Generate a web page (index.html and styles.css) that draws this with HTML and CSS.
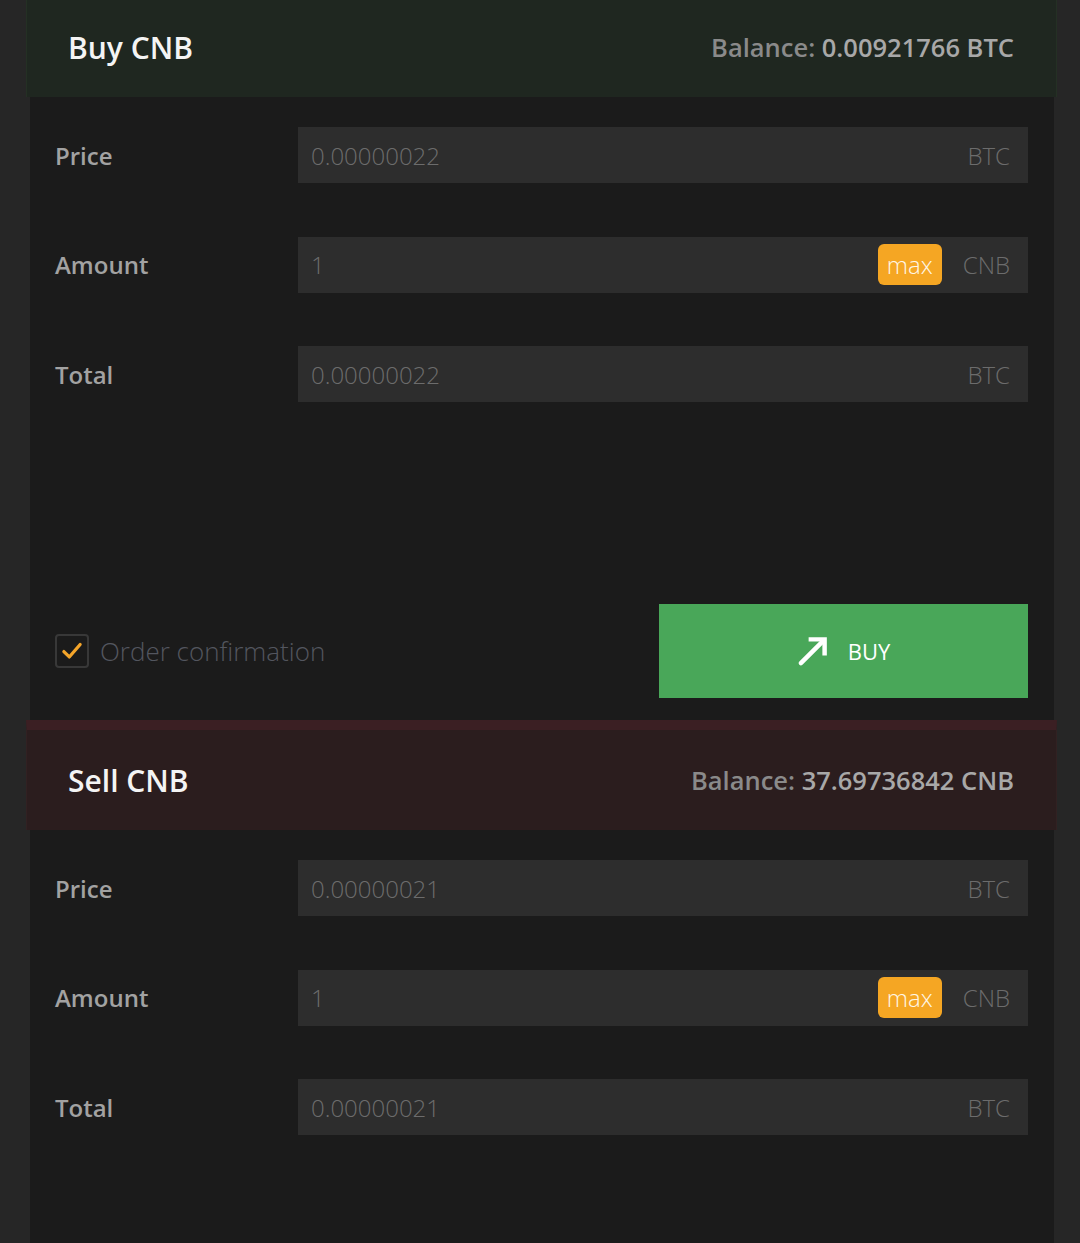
FILE: index.html
```html
<!DOCTYPE html>
<html lang="en">
<head>
    <meta charset="UTF-8">
    <meta name="viewport" content="width=device-width, initial-scale=1.0">
    <title>Trade CNB</title>
    <link rel="stylesheet" href="styles.css">
</head>
<body>
    <div class="panel">
        <!-- Buy form -->
        <div class="trade-head buy">
            <h2>Buy CNB</h2>
            <div class="balance">Balance: <span>0.00921766 BTC</span></div>
        </div>

        <div class="trade-form">
            <div class="row">
                <label>Price</label>
                <div class="field">
                    <span class="value">0.00000022</span>
                    <span class="unit">BTC</span>
                </div>
            </div>
            <div class="row">
                <label>Amount</label>
                <div class="field">
                    <span class="value">1</span>
                    <span class="max">max</span>
                    <span class="unit">CNB</span>
                </div>
            </div>
            <div class="row">
                <label>Total</label>
                <div class="field">
                    <span class="value">0.00000022</span>
                    <span class="unit">BTC</span>
                </div>
            </div>

            <div class="actions">
                <div class="confirm">
                    <span class="checkbox">
                        <svg viewBox="0 0 24 24" fill="none">
                            <path d="M4.5 12.5L9.5 17.5L19.5 6" stroke="#f4a52a" stroke-width="3" stroke-linecap="round" stroke-linejoin="round"/>
                        </svg>
                    </span>
                    Order confirmation
                </div>
                <button class="btn-buy">
                    <svg class="arrow" viewBox="0 0 32 32" fill="none">
                        <path d="M4 28L26 6" stroke="#fff" stroke-width="4.6" stroke-linecap="round"/>
                        <path d="M12 3.5H28.5V20" stroke="#fff" stroke-width="4.6" stroke-linejoin="miter"/>
                    </svg>
                    BUY
                </button>
            </div>
        </div>

        <!-- Sell form -->
        <div class="trade-head sell">
            <h2>Sell CNB</h2>
            <div class="balance">Balance: <span>37.69736842 CNB</span></div>
        </div>

        <div class="trade-form">
            <div class="row">
                <label>Price</label>
                <div class="field">
                    <span class="value">0.00000021</span>
                    <span class="unit">BTC</span>
                </div>
            </div>
            <div class="row">
                <label>Amount</label>
                <div class="field">
                    <span class="value">1</span>
                    <span class="max">max</span>
                    <span class="unit">CNB</span>
                </div>
            </div>
            <div class="row">
                <label>Total</label>
                <div class="field">
                    <span class="value">0.00000021</span>
                    <span class="unit">BTC</span>
                </div>
            </div>
        </div>
    </div>
</body>
</html>
```

FILE: styles.css
```css
* {
    margin: 0;
    padding: 0;
    box-sizing: border-box;
}

body {
    font-family: "Open Sans", "Noto Sans", sans-serif;
    background-color: #262626;
    color: #a4a4a4;
    overflow: hidden;
}

.panel {
    margin: 0 26px 0 30px;
    background-color: #1b1b1b;
    min-height: calc(100vh + 40px);
}

/* Section headers */
.trade-head {
    display: flex;
    align-items: center;
    justify-content: space-between;
    height: 110px;
    margin: 0 -3px 0 -4px;
    padding: 0 42px 0 41px;
    border: 1px solid transparent;
    border-top-width: 10px;
    border-bottom-width: 0;
}

.trade-head.buy {
    margin-top: -13px;
    background-color: #1f2720;
    border-color: #243024;
}

.trade-head.sell {
    background-color: #2b1d1e;
    border-color: #312122;
    border-top-color: #3b1f23;
}

.trade-head h2 {
    font-size: 30px;
    font-weight: 600;
    color: #f4f4f4;
}

.balance {
    font-size: 25.5px;
    font-weight: 600;
    color: #8a8a8a;
}

.balance span {
    color: #a8a8a8;
}

/* Form rows */
.trade-form {
    padding: 30px 26px 0 25px;
}

.row {
    display: flex;
    align-items: center;
    height: 56px;
    margin-bottom: 53.5px;
}

.row label {
    width: 243px;
    font-size: 24px;
    font-weight: 600;
    color: #a2a2a2;
}

.field {
    flex: 1;
    display: flex;
    align-items: center;
    height: 56px;
    padding: 0 18px 0 13px;
    background-color: #2d2d2d;
    font-size: 24px;
    font-weight: 300;
    color: #6c6c6c;
}

.field .value {
    flex: 1;
}

.max {
    display: inline-flex;
    align-items: center;
    justify-content: center;
    width: 64px;
    height: 41px;
    margin-right: 21px;
    border-radius: 6px;
    background-color: #f5a623;
    color: #fff6e6;
}

/* Confirm + button */
.actions {
    display: flex;
    align-items: center;
    justify-content: space-between;
    margin-top: 202px;
    padding-bottom: 22px;
}

.confirm {
    display: flex;
    align-items: center;
    gap: 11px;
    font-size: 26px;
    font-weight: 300;
    color: #53565f;
}

.checkbox {
    display: flex;
    align-items: center;
    justify-content: center;
    width: 34px;
    height: 34px;
    border: 2px solid #383838;
    border-radius: 4px;
}

.checkbox svg {
    width: 26px;
    height: 26px;
}

.btn-buy {
    display: flex;
    align-items: center;
    justify-content: center;
    gap: 20px;
    width: 369px;
    height: 94px;
    border: none;
    background-color: #49a759;
    color: #fff;
    font-family: inherit;
    font-size: 22px;
    font-weight: 400;
    cursor: pointer;
}

.arrow {
    width: 31px;
    height: 31px;
}
```
